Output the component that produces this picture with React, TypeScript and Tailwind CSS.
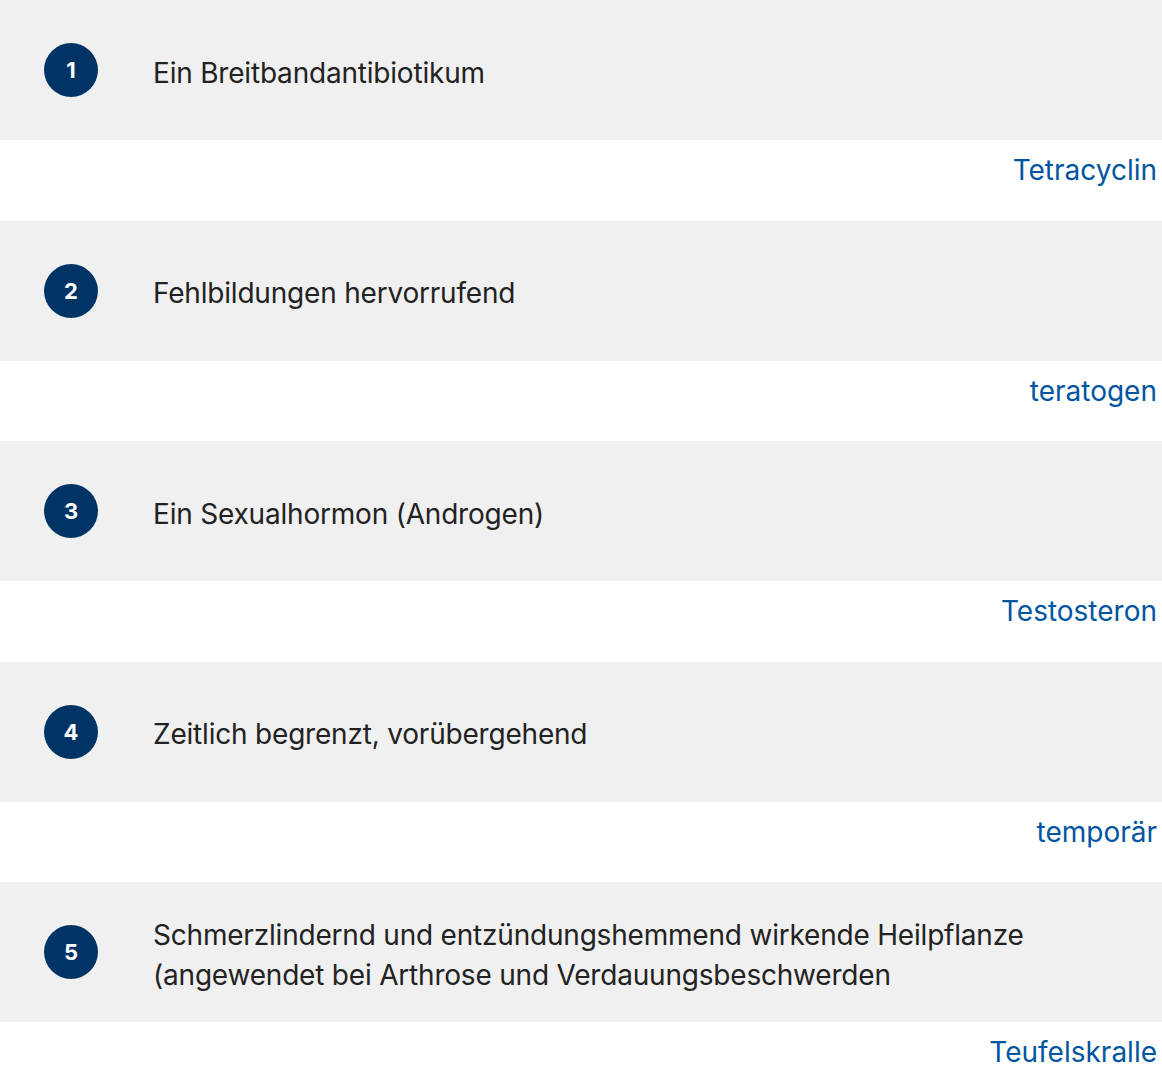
const items = [
  { q: "Ein Breitbandantibiotikum", a: "Tetracyclin" },
  { q: "Fehlbildungen hervorrufend", a: "teratogen" },
  { q: "Ein Sexualhormon (Androgen)", a: "Testosteron" },
  { q: "Zeitlich begrenzt, vorübergehend", a: "temporär" },
  {
    q: "Schmerzlindernd und entzündungshemmend wirkende Heilpflanze (angewendet bei Arthrose und Verdauungsbeschwerden",
    a: "Teufelskralle",
  },
];

export default function App() {
  return (
    <div className="w-[1162px] bg-white font-['Inter',sans-serif] text-[28px] leading-[40px] text-[#222]">
      {items.map((item, i) => (
        <div key={i}>
          <div className="flex h-[140px] items-center bg-[#f0f0f0] pr-[100px]">
            <div className="ml-[44px] flex h-[54px] w-[54px] shrink-0 items-center justify-center rounded-full bg-[#003466] text-[22px] font-bold text-white">
              {i + 1}
            </div>
            <p className="ml-[55px] pt-[5px] tracking-[-0.2px]">{item.q}</p>
          </div>
          <div className="flex h-[80.5px] justify-end pr-[5px] pt-[10px] text-[#0055a0]">
            {item.a}
          </div>
        </div>
      ))}
    </div>
  );
}
